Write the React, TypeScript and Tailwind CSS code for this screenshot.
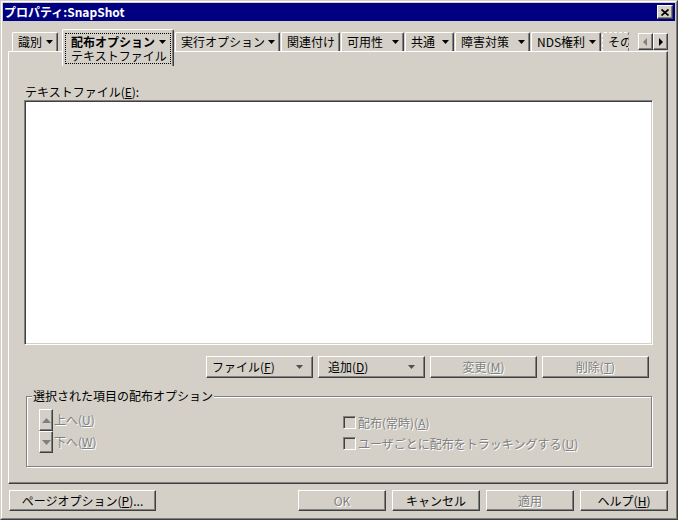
import React from 'react';

const FONT = "font-['Noto_Sans_CJK_JP',sans-serif] text-[12px] leading-[14px]";
const RAISED =
  'border border-t-white border-l-white border-r-[#404040] border-b-[#404040] shadow-[inset_-1px_-1px_0_#808080]';
const DIS = 'text-[#808080] [text-shadow:1px_1px_0_#fff]';

function Down({ color = '#000' }: { color?: string }) {
  return (
    <svg width="7" height="4" viewBox="0 0 7 4" className="shrink-0">
      <polygon points="0,0 7,0 3.5,4" fill={color} />
    </svg>
  );
}

type TabItem = { label: string; cls: string; arrow: boolean };

const leftTabs: TabItem[] = [{ label: '識別', cls: 'ml-[9px] w-[46px]', arrow: true }];

const rightTabs: TabItem[] = [
  { label: '実行オプション', cls: 'ml-[1px] w-[105px]', arrow: true },
  { label: '関連付け', cls: 'ml-[1px] w-[59px]', arrow: false },
  { label: '可用性', cls: 'ml-[1px] w-[63px]', arrow: true },
  { label: '共通', cls: 'ml-[1px] w-[49px]', arrow: true },
  { label: '障害対策', cls: 'ml-[1px] w-[75px]', arrow: true },
  { label: 'NDS権利', cls: 'ml-[1px] w-[70px]', arrow: true },
];

function Tab({ label, cls, arrow }: TabItem) {
  return (
    <div
      className={`${cls} flex h-[19px] shrink-0 items-center justify-between whitespace-nowrap rounded-t-[2px] border-l border-t border-r border-l-white border-t-white border-r-[#404040] pl-[5px] pr-[4px] shadow-[inset_-1px_0_0_#808080]`}
    >
      <span>{label}</span>
      {arrow && <Down />}
    </div>
  );
}

function Button({
  children,
  cls,
  disabled,
}: {
  children: React.ReactNode;
  cls: string;
  disabled?: boolean;
}) {
  return (
    <div className={`${cls} ${RAISED} flex shrink-0 items-center justify-center whitespace-nowrap ${disabled ? DIS : 'text-black'}`}>
      {children}
    </div>
  );
}

function Check({ children }: { children: React.ReactNode }) {
  return (
    <div className="flex h-[13px] items-center">
      <div className="h-[13px] w-[13px] shrink-0 border border-t-[#808080] border-l-[#808080] border-r-white border-b-white bg-[#d4d0c8] shadow-[inset_1px_1px_0_#404040]" />
      <span className={`ml-[2px] whitespace-nowrap ${DIS}`}>{children}</span>
    </div>
  );
}

export default function App() {
  return (
    <div className={`${FONT} h-[520px] w-[678px] border border-t-[#d4d0c8] border-l-[#d4d0c8] border-r-[#404040] border-b-[#404040] bg-[#d4d0c8] text-black`}>
      <div className="flex h-full flex-col border border-t-white border-l-white border-r-[#808080] border-b-[#808080] p-[1px]">
        {/* title bar */}
        <div className="flex h-[18px] shrink-0 items-center justify-between bg-[#000080] pl-[1px] pr-[2px]">
          <span className="text-[12px] font-bold text-white">プロパティ:SnapShot</span>
          <div className={`${RAISED} flex h-[14px] w-[16px] items-center justify-center bg-[#d4d0c8]`}>
            <svg width="8" height="7" viewBox="0 0 8 7">
              <path d="M0.5 0.5 L7.5 6.5 M7.5 0.5 L0.5 6.5" stroke="#000" strokeWidth="1.7" />
            </svg>
          </div>
        </div>

        {/* tab strip */}
        <div className="relative mt-[11px] flex h-[19px] shrink-0 items-start">
          {leftTabs.map((t) => (
            <Tab key={t.label} {...t} />
          ))}
          <div className="relative z-10 -mt-[3px] ml-[4px] h-[37px] w-[112px] shrink-0 rounded-t-[2px] border-l border-t border-r border-l-white border-t-white border-r-[#404040] bg-[#d4d0c8] pb-[2px] pl-[2px] pr-[2px] pt-[3px] shadow-[inset_-1px_0_0_#808080]">
            <div className="whitespace-nowrap border border-dotted border-black pl-[5px] pr-[4px]">
              <div className="flex h-[15px] items-center justify-between">
                <span className="font-bold">配布オプション</span>
                <Down />
              </div>
              <div className="flex h-[14px] items-center">テキストファイル</div>
            </div>
          </div>
          {rightTabs.map((t) => (
            <Tab key={t.label} {...t} />
          ))}
          <div className="ml-[1px] flex h-[19px] w-[27px] shrink-0 items-center overflow-hidden whitespace-nowrap rounded-tl-[2px] border-l border-t border-r border-dashed border-l-white border-t-white border-r-[#808080] pl-[5px]">
            その他
          </div>
          <div className="absolute right-[7px] top-[1px] flex">
            <div className={`${RAISED} flex h-[17px] w-[15px] items-center justify-center`}>
              <svg width="5" height="8" viewBox="0 0 5 8">
                <polygon points="4,0 4,8 0,4" fill="#808080" />
              </svg>
            </div>
            <div className={`${RAISED} flex h-[17px] w-[15px] items-center justify-center`}>
              <svg width="5" height="8" viewBox="0 0 5 8">
                <polygon points="1,0 1,8 5,4" fill="#000" />
              </svg>
            </div>
          </div>
        </div>

        {/* panel */}
        <div className="ml-[5px] h-[433px] w-[660px] shrink-0 border border-t-white border-l-white border-r-[#404040] border-b-[#404040] pl-[15px] pt-[33px] shadow-[inset_-1px_-1px_0_#808080]">
          <div className="w-[629px]">
            <div className="h-[14px] pl-[1px]">
              テキストファイル(<u>E</u>):
            </div>
            <div className="mt-[1px] h-[245px] border border-t-[#808080] border-l-[#808080] border-r-white border-b-white bg-white shadow-[inset_1px_1px_0_#404040,inset_-1px_-1px_0_#d4d0c8]" />

            <div className="mt-[11px] flex justify-end gap-[5px] pr-[4px]">
              <div className={`${RAISED} flex h-[22px] w-[107px] items-center justify-between pl-[5px] pr-[9px]`}>
                <span>
                  ファイル(<u>F</u>)
                </span>
                <Down color="#505050" />
              </div>
              <div className={`${RAISED} flex h-[22px] w-[107px] items-center justify-between pl-[9px] pr-[9px]`}>
                <span>
                  追加(<u>D</u>)
                </span>
                <Down color="#505050" />
              </div>
              <Button cls="h-[22px] w-[107px]" disabled>
                変更(<u>M</u>)
              </Button>
              <Button cls="h-[22px] w-[107px]" disabled>
                削除(<u>T</u>)
              </Button>
            </div>

            {/* group box */}
            <div className="relative ml-[2px] mt-[18px] flex h-[71px] w-[626px] border border-[#808080] pl-[12px] pt-[12px] shadow-[inset_1px_1px_0_#fff,1px_1px_0_#fff]">
              <span className="absolute -top-[8px] left-[5px] bg-[#d4d0c8] px-[1px]">選択された項目の配布オプション</span>
              <div className="flex w-[304px] shrink-0 flex-col">
                <div className="flex items-center">
                  <div className={`${RAISED} flex h-[22px] w-[14px] items-center justify-center`}>
                    <svg width="9" height="5" viewBox="0 0 9 5">
                      <polygon points="0,5 9,5 4.5,0" fill="#808080" />
                    </svg>
                  </div>
                  <span className={`ml-[1px] ${DIS}`}>
                    上へ(<u>U</u>)
                  </span>
                </div>
                <div className="flex items-center">
                  <div className={`${RAISED} flex h-[22px] w-[14px] items-center justify-center`}>
                    <svg width="9" height="5" viewBox="0 0 9 5">
                      <polygon points="0,0 9,0 4.5,5" fill="#808080" />
                    </svg>
                  </div>
                  <span className={`ml-[1px] ${DIS}`}>
                    下へ(<u>W</u>)
                  </span>
                </div>
              </div>
              <div className="flex flex-col gap-[8px] pt-[7px]">
                <Check>
                  配布(常時)(<u>A</u>)
                </Check>
                <Check>
                  ユーザごとに配布をトラッキングする(<u>U</u>)
                </Check>
              </div>
            </div>
          </div>
        </div>

        {/* bottom buttons */}
        <div className="mt-[6px] flex pl-[6px] pr-[7px]">
          <Button cls="h-[21px] w-[147px]">
            ページオプション(<u>P</u>)...
          </Button>
          <div className="ml-auto flex gap-[6px]">
            <Button cls="h-[21px] w-[88px]" disabled>
              OK
            </Button>
            <Button cls="h-[21px] w-[88px]">キャンセル</Button>
            <Button cls="h-[21px] w-[88px]" disabled>
              適用
            </Button>
            <Button cls="h-[21px] w-[88px]">
              ヘルプ(<u>H</u>)
            </Button>
          </div>
        </div>
      </div>
    </div>
  );
}
